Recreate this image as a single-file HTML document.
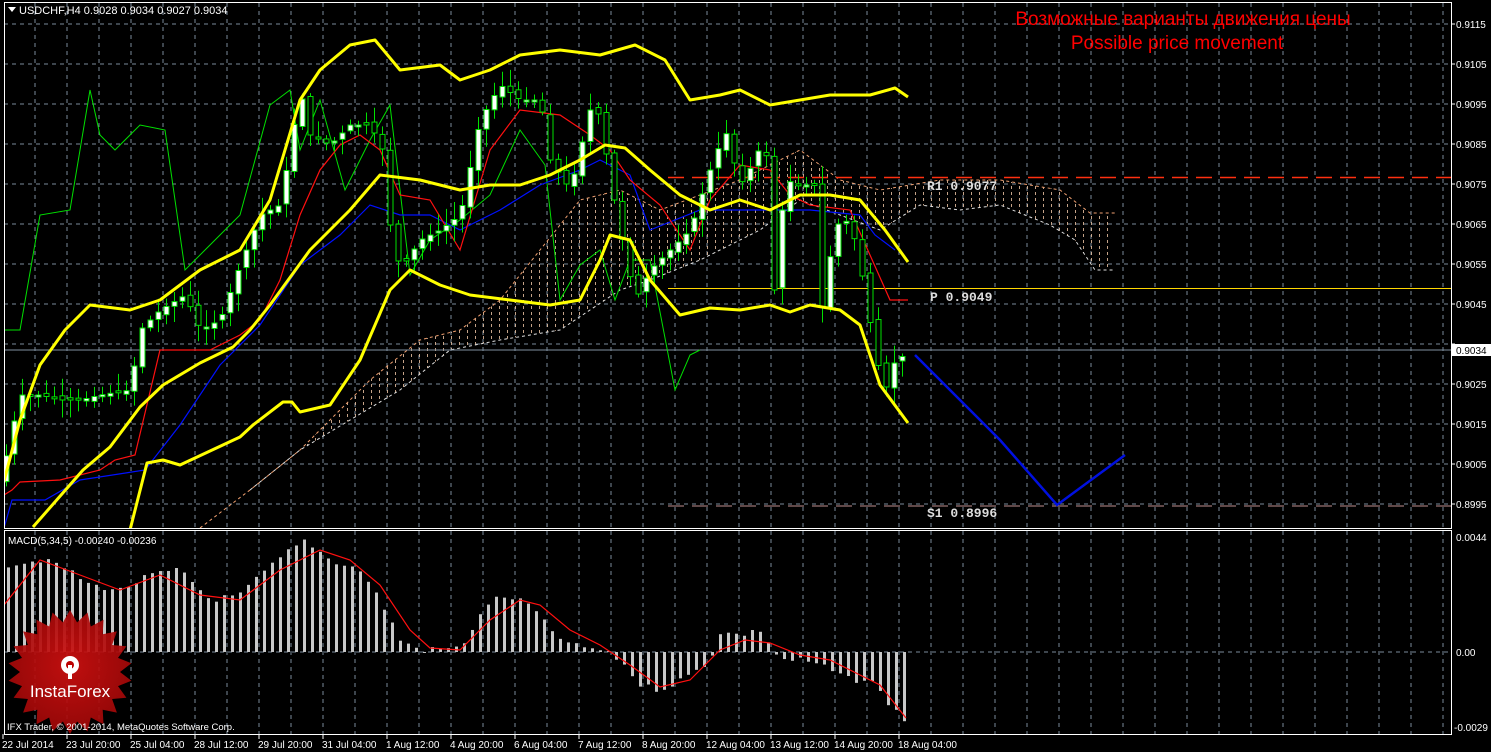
<!DOCTYPE html>
<html><head><meta charset="utf-8"><style>
html,body{margin:0;padding:0;background:#000;width:1491px;height:752px;overflow:hidden}
svg{display:block}
text{font-family:"Liberation Sans","DejaVu Sans",sans-serif}
.ax{fill:#fff;font-size:10px}
.mono{font-family:"Liberation Mono","DejaVu Sans Mono",monospace;font-weight:bold;fill:#ddd;font-size:13px}
</style></head><body>
<svg id="s" width="1491" height="752" viewBox="0 0 1491 752" xmlns="http://www.w3.org/2000/svg">
<defs>
<pattern id="hatch" width="8" height="6" patternUnits="userSpaceOnUse"><rect x="3" y="0" width="1" height="3" fill="#e8c0a0"/></pattern>
<radialGradient id="rg" cx="50%" cy="45%" r="55%"><stop offset="0" stop-color="#d01010"/><stop offset="1" stop-color="#a00808"/></radialGradient>
<clipPath id="mainc"><rect x="4" y="3" width="1447" height="525"/></clipPath>
<clipPath id="macdc"><rect x="4" y="531" width="1447" height="203"/></clipPath>
</defs>
<rect width="1491" height="752" fill="#000"/>
<g id="grid" stroke="#7a8a9a" stroke-width="1" stroke-dasharray="4,4"></g>
<g clip-path="url(#mainc)">
<path d="M200,528 L250,490 300,450 370,380 420,340 460,330 500,300 540,250 580,200 620,190 660,210 700,195 740,180 800,150 840,180 880,190 940,180 1000,180 1060,190 1090,213 1115,213 1115,270 1095,270 1075,240 1050,225 1000,205 960,210 920,205 880,230 840,215 800,200 760,230 700,260 650,280 620,290 560,330 500,340 450,350 400,390 300,450 250,490 Z" fill="url(#hatch)" opacity="0.85"/>
<polyline fill="none" stroke="#f0a070" stroke-width="1" stroke-dasharray="3,3" points="200,528 250,490 300,450 370,380 420,340 460,330 500,300 540,250 580,200 620,190 660,210 700,195 740,180 800,150 840,180 880,190 940,180 1000,180 1060,190 1090,213 1115,213"/>
<polyline fill="none" stroke="#e0e0e0" stroke-width="1" stroke-dasharray="3,3" points="250,490 300,450 400,390 450,350 500,340 560,330 620,290 650,280 700,260 760,230 800,200 840,215 880,230 920,205 960,210 1000,205 1050,225 1075,240 1095,270 1115,270"/>
<line x1="4" y1="350" x2="1451" y2="350" stroke="#8090a0" stroke-width="1"/>
<line x1="668" y1="177.5" x2="1451" y2="177.5" stroke="#ff3010" stroke-width="1.5" stroke-dasharray="16,8"/>
<line x1="668" y1="288.5" x2="1451" y2="288.5" stroke="#ffd700" stroke-width="1"/>
<line x1="668" y1="506" x2="1451" y2="506" stroke="#c09090" stroke-width="1" stroke-dasharray="16,8"/>
<polyline fill="none" stroke="#00e000" stroke-width="1" points="4,330 20,330 40,215 70,210 90,90 100,135 115,150 140,125 165,130 185,270 210,245 240,215 270,105 290,90 300,150 320,100 345,190 370,140 390,105 410,275 430,240 460,220 490,195 520,130 545,165 560,300 580,265 600,250 615,300 630,260 650,260 675,390 690,355 700,350"/>
<polyline fill="none" stroke="#0010ff" stroke-width="1.2" points="4,528 12,500 45,500 80,480 145,470 180,425 220,365 260,325 300,265 340,235 370,205 400,215 430,215 460,230 500,210 540,185 580,170 600,160 630,175 650,230 700,210 760,210 810,210 860,215 875,235 895,250"/>
<polyline fill="none" stroke="#ff1010" stroke-width="1.2" points="4,495 12,490 20,482 60,480 100,470 115,460 135,455 160,350 190,350 210,350 240,335 260,320 280,280 300,215 320,170 340,145 360,135 380,150 400,195 430,200 460,250 490,150 520,110 560,115 590,135 610,150 630,180 660,205 690,250 710,200 740,165 770,170 790,195 810,205 850,210 870,255 890,300 908,300"/>
<g id="candles"></g>
<g fill="none" stroke="#ffff00" stroke-width="3" stroke-linejoin="round">
<polyline points="3,485 20,420 40,365 65,330 90,305 130,310 160,300 200,270 240,250 270,200 300,100 320,70 350,45 375,40 400,70 440,65 460,80 490,70 520,55 560,50 600,55 635,45 665,60 690,100 720,95 740,90 770,105 800,100 830,95 870,95 895,88 908,97"/>
<polyline points="33,527 83,470 110,447 140,407 163,385 200,363 233,347 250,330 270,305 310,250 350,210 380,175 420,180 460,190 490,185 520,185 550,175 580,160 605,145 625,148 650,170 680,195 710,210 740,200 770,210 800,195 830,195 860,200 885,230 908,262"/>
<polyline points="130,530 147,463 163,460 180,465 240,437 253,425 283,402 292,402 300,412 330,405 360,360 390,290 410,270 440,285 470,295 510,300 550,305 580,300 600,260 610,235 630,240 650,280 680,315 710,308 740,310 770,305 790,312 810,305 840,310 860,325 880,385 908,423"/>
</g>
<polyline fill="none" stroke="#0010e0" stroke-width="2.5" points="915,355 1000,440 1057,505 1125,455"/>
</g>
<text class="mono" x="927" y="190">R1 0.9077</text>
<text class="mono" x="930" y="301">P 0.9049</text>
<text class="mono" x="927" y="517">S1 0.8996</text>
<text x="1183" y="25" text-anchor="middle" fill="#ff0000" style="font-size:19px">Возможные варианты движения цены</text>
<text x="1177" y="49" text-anchor="middle" fill="#ff0000" style="font-size:19px">Possible price movement</text>
<g clip-path="url(#macdc)"><g id="macd"></g>
<polyline id="sig" fill="none" stroke="#ff1010" stroke-width="1.2"/></g>
<rect x="4.5" y="2.5" width="1447" height="526" fill="none" stroke="#fff"/>
<rect x="4.5" y="530.5" width="1447" height="204" fill="none" stroke="#fff"/>
<polygon points="8,7 16,7 12,12" fill="#fff"/>
<text x="19" y="14" fill="#fff" style="font-size:11px">USDCHF,H4  0.9028 0.9034 0.9027 0.9034</text>
<text x="8" y="544" fill="#fff" style="font-size:10px">MACD(5,34,5) -0.00240 -0.00236</text>
<g id="pax" class="ax"></g>
<rect x="1452" y="344" width="39" height="12" fill="#fff"/>
<text x="1456" y="354" fill="#000" style="font-size:10px">0.9034</text>
<text class="ax" x="1456" y="541">0.0044</text>
<text class="ax" x="1456" y="656">0.00</text>
<text class="ax" x="1454" y="731">-0.0029</text>
<g id="tax" class="ax"></g>
<polygon id="star" fill="url(#rg)" opacity="0.92"/>
<g fill="#fff"><circle cx="70" cy="665" r="9"/><circle cx="70" cy="665" r="4" fill="#b00"/><rect x="68" y="665" width="4" height="14"/></g>
<text x="70" y="697" text-anchor="middle" fill="#fff" style="font-size:17px">InstaForex</text>
<text x="7" y="730" fill="#fff" style="font-size:9.5px">IFX Trader, © 2001-2014, MetaQuotes Software Corp.</text>
</svg>
<script>
(function(){
var NS="http://www.w3.org/2000/svg",s=document.getElementById('s');
function el(t,a,p){var e=document.createElementNS(NS,t);for(var k in a)e.setAttribute(k,a[k]);(p||s).appendChild(e);return e;}
var g=document.getElementById('grid');
for(var x=35;x<1451;x+=32){el('line',{x1:x,y1:3,x2:x,y2:528},g);el('line',{x1:x,y1:531,x2:x,y2:734},g);}
var pax=document.getElementById('pax');
for(var i=0;i<13;i++){var y=24+i*40;if(y>527)break;el('line',{x1:4,y1:y,x2:1451,y2:y},g);
 if(y!=344){var t=el('text',{x:1456,y:y+4},pax);t.textContent=(0.9115-i*0.001).toFixed(4);}
 el('line',{x1:1451,y1:y,x2:1455,y2:y,stroke:'#fff'},s);}
el('line',{x1:4,y1:652,x2:1451,y2:652},g);
var labs=["22 Jul 2014","23 Jul 20:00","25 Jul 04:00","28 Jul 12:00","29 Jul 20:00","31 Jul 04:00","1 Aug 12:00","4 Aug 20:00","6 Aug 04:00","7 Aug 12:00","8 Aug 20:00","12 Aug 04:00","13 Aug 12:00","14 Aug 20:00","18 Aug 04:00"];
var tax=document.getElementById('tax');
for(var i=0;i<labs.length;i++){var t=el('text',{x:2+i*64,y:748},tax);t.textContent=labs[i];el('line',{x1:3+i*64,y1:734,x2:3+i*64,y2:739,stroke:'#fff'},s);}
function interp(pts,x){for(var i=1;i<pts.length;i++){if(x<=pts[i][0]){var a=pts[i-1],b=pts[i];return a[1]+(b[1]-a[1])*(x-a[0])/(b[0]-a[0]);}}return pts[pts.length-1][1];}
var cl=[[5,460],[20,395],[40,395],[60,400],[80,400],[100,395],[130,390],[140,330],[160,310],[185,295],[200,330],[220,320],[240,265],[260,215],[280,205],[300,90],[310,135],[330,145],[350,125],[370,125],[385,155],[390,225],[400,270],[420,240],[440,230],[460,215],[480,120],[500,85],[520,100],[540,100],[550,160],[570,190],[590,110],[600,115],[610,180],[620,230],[635,300],[650,270],[670,250],[690,230],[710,170],[725,130],[740,185],[755,160],[765,130],[772,310],[785,180],[800,185],[815,185],[820,320],[835,225],[850,220],[865,290],[875,355],[885,390],[895,360],[905,355]];
var seed=7;function rnd(){seed=(seed*9301+49297)%233280;return seed/233280;}
var cg=document.getElementById('candles');var prev=interp(cl,0);
for(var x=6;x<=906;x+=8){var c=interp(cl,x),o=prev+(rnd()-0.5)*6;var tp=Math.min(o,c),bt=Math.max(o,c);if(bt-tp<2)bt=tp+2;
 var hi=tp-3-rnd()*15,lo=bt+3+rnd()*15;
 el('line',{x1:x+0.5,y1:hi,x2:x+0.5,y2:lo,stroke:'#00e000'},cg);
 el('rect',{x:x-2,y:tp,width:5,height:bt-tp,fill:(c<o?'#fff':'#000'),stroke:'#00e000','stroke-width':1},cg);prev=c;}
var mh=[[4,565],[40,560],[60,565],[90,585],[120,590],[150,575],[180,570],[210,600],[240,595],[260,575],[290,550],[305,540],[330,560],[360,570],[380,600],[400,640],[420,650],[460,648],[490,600],[510,597],[530,605],[550,630],[570,645],[600,650],[620,660],[640,685],[660,690],[690,675],[710,660],[720,632],[740,635],[760,630],[780,660],[800,660],[820,665],[850,680],[870,680],[890,705],[906,722]];
var mg=document.getElementById('macd');
for(var x=8;x<=906;x+=8){var v=interp(mh,x)+(rnd()-0.5)*6;var y1=Math.min(v,652),y2=Math.max(v,652);
 el('rect',{x:x-1,y:y1,width:3,height:Math.max(1,y2-y1),fill:'#c8c8c8'},mg);}
var sg=[[4,605],[40,560],[80,575],[120,590],[160,575],[200,595],[240,600],[280,570],[320,550],[350,560],[380,585],[410,630],[430,648],[460,650],[490,620],[520,600],[540,605],[570,630],[600,645],[630,665],[660,687],[690,680],[720,650],[745,640],[770,643],[800,655],[830,660],[860,675],[880,685],[906,718]];
document.getElementById('sig').setAttribute('points',sg.map(function(p){return p.join(',')}).join(' '));
var pts=[],cx=70,cy=672,n=22;for(var i=0;i<n*2;i++){var r=i%2?50:62,a=i*Math.PI/n-Math.PI/2;pts.push((cx+r*Math.cos(a)).toFixed(1)+','+(cy+r*Math.sin(a)).toFixed(1));}
document.getElementById('star').setAttribute('points',pts.join(' '));
})();
</script>
</body></html>
